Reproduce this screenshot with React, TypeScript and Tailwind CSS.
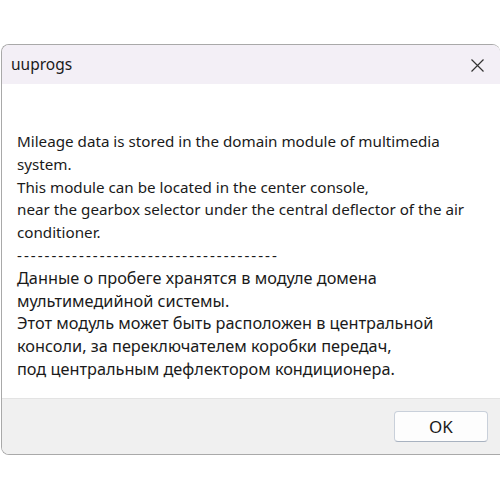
import React from "react";

export default function App() {
  const font = { fontFamily: '"Noto Sans", "Open Sans", sans-serif' };
  return (
    <div className="w-[500px] h-[500px] bg-white pt-[44px] overflow-hidden" style={font}>
      <div className="ml-[1px] w-[499px] h-[411px] flex flex-col rounded-t-[8px] rounded-bl-[8px] border border-r-0 border-[#a9a9a9] overflow-hidden">
        <div className="h-[39px] shrink-0 bg-[#f3eff6] flex items-center justify-between pl-[9px] pr-[16px]">
          <span className="text-[15.5px] text-[#1a1a1a] mt-[1px]">uuprogs</span>
          <svg width="13" height="13" viewBox="0 0 13 13" className="mt-[1px]">
            <path d="M0.5 0.5 L12.5 12.5 M12.5 0.5 L0.5 12.5" stroke="#333" strokeWidth="1.2" fill="none" />
          </svg>
        </div>
        <div className="flex-1 bg-white pt-[46px] pl-[15px] pr-[10px] text-[15.2px] leading-[22.8px] text-[#1a1a1a]">
          <div>Mileage data is stored in the domain module of multimedia</div>
          <div>system.</div>
          <div>This module can be located in the center console,</div>
          <div>near the gearbox selector under the central deflector of the air</div>
          <div>conditioner.</div>
          <div className="tracking-[2px]">--------------------------------------</div>
          <div className="text-[16.3px]">
            <div>Данные о пробеге хранятся в модуле домена</div>
            <div>мультимедийной системы.</div>
            <div>Этот модуль может быть расположен в центральной</div>
            <div>консоли, за переключателем коробки передач,</div>
            <div>под центральным дефлектором кондиционера.</div>
          </div>
        </div>
        <div className="h-[56px] shrink-0 bg-[#f0f0f0] border-t border-[#e3e3e3] flex items-start justify-end pt-[12px] pr-[12px]">
          <button className="w-[94px] h-[31px] rounded-[4px] bg-[#fdfdfd] border border-[#c9d0da] border-b-[#a8b2c0] text-[17px] text-[#1a1a1a] leading-none">
            OK
          </button>
        </div>
      </div>
    </div>
  );
}
